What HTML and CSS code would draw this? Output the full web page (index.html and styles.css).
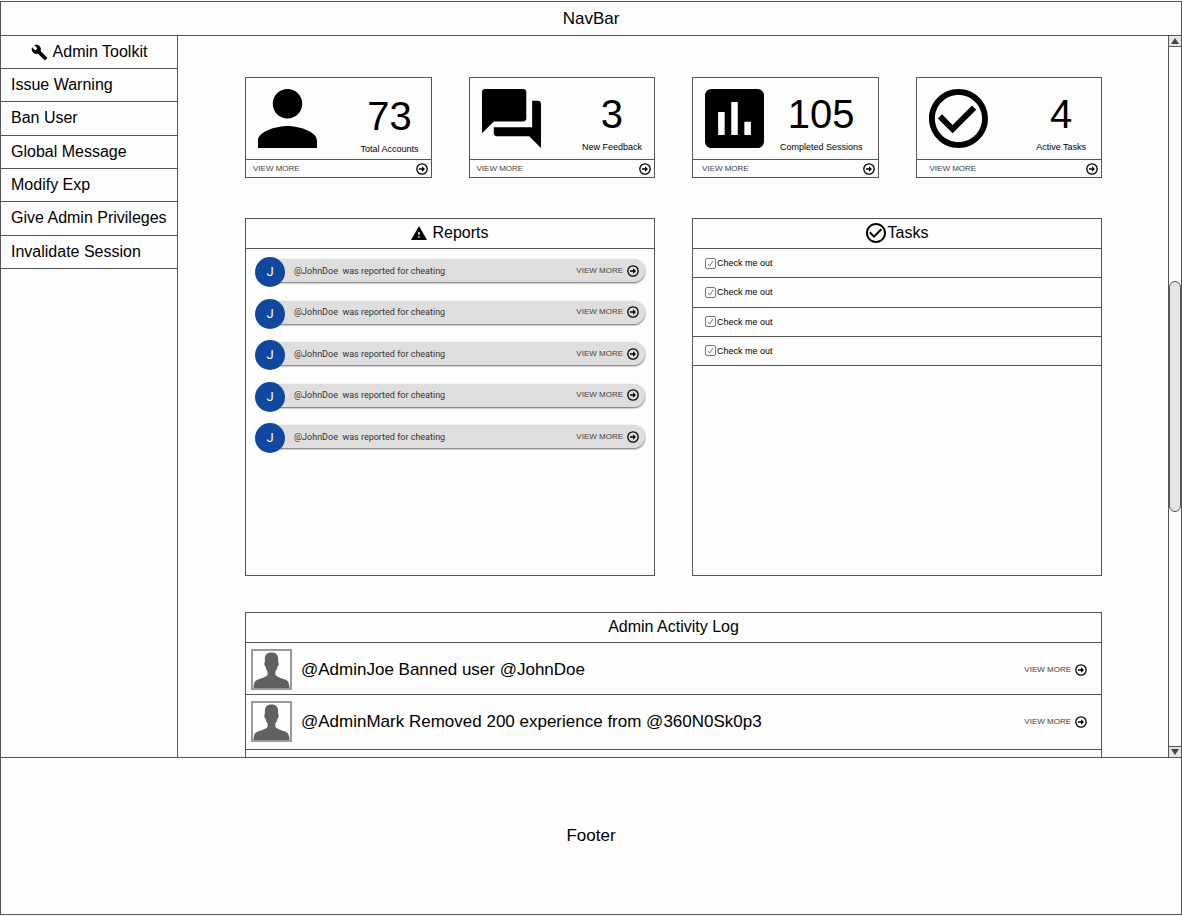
FILE: index.html
```
<!DOCTYPE html>
<html lang="en">
<head>
<meta charset="utf-8">
<title>Admin Dashboard</title>
<link rel="stylesheet" href="styles.css">
</head>
<body>
<svg class="sprite" aria-hidden="true">
  <symbol id="arrow" viewBox="0 0 12 12">
    <circle cx="6" cy="6" r="5.2" fill="none" stroke="#000" stroke-width="1.300"/>
    <path d="M3 5.200h3V3.200l3 2.800-3 2.800V6.800H3z"/>
  </symbol>
  <symbol id="check-circle" viewBox="2 2 20 20">
    <path d="M16.590 7.580L10 14.170l-3.590-3.580L5 12l5 5 8-8zM12 2C6.480 2 2 6.480 2 12s4.480 10 10 10 10-4.480 10-10S17.520 2 12 2zm0 18c-4.420 0-8-3.580-8-8s3.580-8 8-8 8 3.580 8 8-3.580 8-8 8z"/>
  </symbol>
  <symbol id="silhouette" viewBox="0 0 38 38">
    <path d="M12.200 8C12.200 3.500 15 1.500 19 1.500S25.800 3.500 25.800 8v3.500c1.200.3.600 4-.6 4.300-.4 2.400-1.300 4-2.200 5v3.700c1 1.500 2.500 2.200 4.500 3l6 2c3 1.200 3.800 4 4 8.500H.5c.2-4.500 1-7.300 4-8.500l6-2c2-.8 3.500-1.500 4.500-3v-3.700c-.9-1-1.800-2.600-2.200-5-1.200-.3-1.800-4-.6-4.300z" fill="#606060"/>
  </symbol>
</svg>
<div class="app">
  <header class="navbar">NavBar</header>
  <div class="middle">
    <nav class="sidebar" aria-label="Admin Toolkit">
      <h2 class="sidebar-title">
        <svg class="wrench" viewBox="0 0 24 24" aria-hidden="true"><path d="M22.700 19l-9.100-9.100c.9-2.300.4-5-1.500-6.900-2-2-5-2.400-7.400-1.300L9 6 6 9 1.600 4.700C.4 7.100.9 10.100 2.900 12.100c1.900 1.900 4.600 2.400 6.900 1.500l9.100 9.100c.4.4 1 .4 1.400 0l2.300-2.300c.5-.4.5-1.100.1-1.400z"/></svg>
        Admin Toolkit
      </h2>
      <div class="sidebar-links">
        <a class="sidebar-link" href="#">Issue Warning</a>
        <a class="sidebar-link" href="#">Ban User</a>
        <a class="sidebar-link" href="#">Global Message</a>
        <a class="sidebar-link" href="#">Modify Exp</a>
        <a class="sidebar-link" href="#">Give Admin Privileges</a>
        <a class="sidebar-link" href="#">Invalidate Session</a>
      </div>
    </nav>

    <main class="content">
      <section class="stats">
        <article class="card">
          <div class="card-body">
            <svg class="card-icon" viewBox="4 4 16 16" aria-hidden="true"><path d="M12 12c2.210 0 4-1.790 4-4s-1.790-4-4-4-4 1.790-4 4 1.790 4 4 4zm0 2c-2.670 0-8 1.340-8 4v2h16v-2c0-2.660-5.330-4-8-4z"/></svg>
            <div class="figure figure-low"><span class="number">73</span><span class="label">Total Accounts</span></div>
          </div>
          <a class="card-link view-more" href="#">VIEW MORE<svg class="arrow" aria-hidden="true"><use href="#arrow"/></svg></a>
        </article>
        <article class="card">
          <div class="card-body">
            <svg class="card-icon" viewBox="2 2 20 20" aria-hidden="true"><path d="M21 6h-2v9H6v2c0 .55.45 1 1 1h11l4 4V7c0-.55-.45-1-1-1zm-4 6V3c0-.55-.45-1-1-1H3c-.55 0-1 .45-1 1v14l4-4h10c.55 0 1-.45 1-1z"/></svg>
            <div class="figure"><span class="number">3</span><span class="label">New Feedback</span></div>
          </div>
          <a class="card-link view-more" href="#">VIEW MORE<svg class="arrow" aria-hidden="true"><use href="#arrow"/></svg></a>
        </article>
        <article class="card card-wide">
          <div class="card-body">
            <svg class="card-icon" viewBox="3 3 18 18" aria-hidden="true"><path d="M19 3H5c-1.100 0-2 .9-2 2v14c0 1.100.9 2 2 2h14c1.100 0 2-.9 2-2V5c0-1.100-.9-2-2-2zM9 17H7v-7h2v7zm4 0h-2V7h2v10zm4 0h-2v-4h2v4z"/></svg>
            <div class="figure"><span class="number">105</span><span class="label">Completed Sessions</span></div>
          </div>
          <a class="card-link view-more" href="#">VIEW MORE<svg class="arrow" aria-hidden="true"><use href="#arrow"/></svg></a>
        </article>
        <article class="card card-wide card-tasks">
          <div class="card-body">
            <svg class="card-icon" aria-hidden="true"><use href="#check-circle"/></svg>
            <div class="figure"><span class="number">4</span><span class="label">Active Tasks</span></div>
          </div>
          <a class="card-link view-more" href="#">VIEW MORE<svg class="arrow" aria-hidden="true"><use href="#arrow"/></svg></a>
        </article>
      </section>

      <section class="panels">
        <article class="panel">
          <h2 class="panel-title">
            <svg class="warning" viewBox="1 2 22 19" aria-hidden="true"><path d="M1 21h22L12 2 1 21zm12-3h-2v-2h2v2zm0-4h-2v-4h2v4z"/></svg>
            Reports
          </h2>
          <ul class="reports">
            <li class="report"><span class="initial">J</span><div class="bar"><span class="report-text">@JohnDoe&nbsp; was reported for cheating</span><a class="view-more" href="#">VIEW MORE<svg class="arrow" aria-hidden="true"><use href="#arrow"/></svg></a></div></li>
            <li class="report"><span class="initial">J</span><div class="bar"><span class="report-text">@JohnDoe&nbsp; was reported for cheating</span><a class="view-more" href="#">VIEW MORE<svg class="arrow" aria-hidden="true"><use href="#arrow"/></svg></a></div></li>
            <li class="report"><span class="initial">J</span><div class="bar"><span class="report-text">@JohnDoe&nbsp; was reported for cheating</span><a class="view-more" href="#">VIEW MORE<svg class="arrow" aria-hidden="true"><use href="#arrow"/></svg></a></div></li>
            <li class="report"><span class="initial">J</span><div class="bar"><span class="report-text">@JohnDoe&nbsp; was reported for cheating</span><a class="view-more" href="#">VIEW MORE<svg class="arrow" aria-hidden="true"><use href="#arrow"/></svg></a></div></li>
            <li class="report"><span class="initial">J</span><div class="bar"><span class="report-text">@JohnDoe&nbsp; was reported for cheating</span><a class="view-more" href="#">VIEW MORE<svg class="arrow" aria-hidden="true"><use href="#arrow"/></svg></a></div></li>
          </ul>
        </article>
        <article class="panel">
          <h2 class="panel-title panel-title-tight">
            <svg class="tasks-icon" aria-hidden="true"><use href="#check-circle"/></svg>
            Tasks
          </h2>
          <ul class="tasks">
            <li class="task"><label class="task-label"><input class="tick" type="checkbox" checked>Check me out</label></li>
            <li class="task"><label class="task-label"><input class="tick" type="checkbox" checked>Check me out</label></li>
            <li class="task"><label class="task-label"><input class="tick" type="checkbox" checked>Check me out</label></li>
            <li class="task"><label class="task-label"><input class="tick" type="checkbox" checked>Check me out</label></li>
          </ul>
        </article>
      </section>

      <section class="log">
        <h2 class="panel-title">Admin Activity Log</h2>
        <ul class="log-list">
          <li class="log-row"><svg class="avatar" aria-hidden="true"><use href="#silhouette"/></svg><span class="log-text">@AdminJoe Banned user @JohnDoe</span><a class="view-more" href="#">VIEW MORE<svg class="arrow" aria-hidden="true"><use href="#arrow"/></svg></a></li>
          <li class="log-row"><svg class="avatar" aria-hidden="true"><use href="#silhouette"/></svg><span class="log-text">@AdminMark Removed 200 experience from @360N0Sk0p3</span><a class="view-more" href="#">VIEW MORE<svg class="arrow" aria-hidden="true"><use href="#arrow"/></svg></a></li>
          <li class="log-row log-empty"></li>
        </ul>
      </section>
    </main>

    <div class="scrollbar">
      <button class="scroll-button" type="button" aria-label="Scroll up"><svg class="triangle" viewBox="0 0 8 6"><path d="M4 0l4 6H0z" fill="#444"/></svg></button>
      <div class="track"><div class="thumb"></div></div>
      <button class="scroll-button" type="button" aria-label="Scroll down"><svg class="triangle" viewBox="0 0 8 6"><path d="M0 0h8L4 6z" fill="#444"/></svg></button>
    </div>
  </div>
  <footer class="footer">Footer</footer>
</div>
</body>
</html>
```
FILE: styles.css
```
:root {
  --line: #555;
}

* {
  box-sizing: border-box;
}

body {
  margin: 0;
  padding: 1px 0;
  background: #fdfdfd;
  color: #000;
  font: 16px/20px "Liberation Sans", Arial, sans-serif;
}

h2 {
  margin: 0;
  font: inherit;
}

ul {
  margin: 0;
  padding: 0;
  list-style: none;
}

a {
  color: inherit;
  text-decoration: none;
}

.sprite {
  position: absolute;
  width: 0;
  height: 0;
}

.app {
  display: flex;
  flex-direction: column;
  height: calc(100vh - 2px);
  border: 1px solid var(--line);
}

.navbar {
  padding: 7px 0 6px;
  font-size: 17px;
  text-align: center;
}

.middle {
  display: flex;
  flex: 1;
  min-height: 0;
  border: solid var(--line);
  border-width: 1px 0;
}

.sidebar {
  flex: none;
  width: 177px;
  border-right: 1px solid var(--line);
}

.sidebar-title {
  display: flex;
  align-items: center;
  justify-content: center;
  gap: 5px;
  height: 33px;
  border-bottom: 1px solid var(--line);
}

.wrench {
  width: 17px;
  height: 17px;
}

.sidebar-links {
  display: grid;
  grid-auto-rows: 1fr;
  height: 200px;
}

.sidebar-link {
  display: flex;
  align-items: center;
  padding-left: 10px;
  border-bottom: 1px solid var(--line);
}

.content {
  flex: 1;
  min-width: 0;
  overflow: hidden;
  padding: 41px 66px 0 67px;
}

.stats {
  display: grid;
  grid-template-columns: repeat(4, 1fr);
  gap: 37px;
}

.card,
.panel,
.log {
  border: 1px solid var(--line);
}

.card-body {
  display: flex;
  justify-content: space-between;
  padding: 11px 12px 0;
  height: 81px;
}

.card-icon {
  flex: none;
  width: 59px;
  height: 59px;
}

.figure {
  display: flex;
  flex-direction: column;
  align-items: center;
  padding-top: 3px;
}

.figure-low {
  padding-top: 5px;
}

.number {
  font-size: 40px;
  line-height: 44px;
}

.label {
  font-size: 9px;
  line-height: 22px;
}

.card-wide .card-body {
  padding-right: 15px;
}

.view-more {
  display: flex;
  align-items: center;
  gap: 4px;
  color: #444;
  font-size: 8px;
  line-height: 12px;
}

.arrow {
  width: 12px;
  height: 12px;
}

.card-link {
  justify-content: space-between;
  height: 18px;
  padding: 0 3px 0 7px;
  border-top: 1px solid var(--line);
}

.card-wide .card-link {
  padding-left: 9px;
}

.card-tasks .card-link {
  padding-left: 13px;
}

.panels {
  display: grid;
  grid-template-columns: repeat(2, 1fr);
  gap: 37px;
  margin: 40px 0 36px;
}

.panel {
  min-height: 358px;
}

.panel-title {
  display: flex;
  align-items: center;
  justify-content: center;
  gap: 5px;
  height: 30px;
  padding-bottom: 2px;
  border-bottom: 1px solid var(--line);
}

.panel-title-tight {
  gap: 2px;
}

.warning {
  width: 16px;
  height: 14px;
}

.tasks-icon {
  width: 20px;
  height: 20px;
}

.reports {
  display: grid;
  align-content: space-between;
  height: 212px;
  padding: 8px 9px;
}

.report {
  display: flex;
}

.initial {
  z-index: 1;
  flex: none;
  width: 30px;
  border-radius: 50%;
  background: #11489f;
  color: #fff;
  font: 13px/30px Roboto, sans-serif;
  text-align: center;
}

.bar {
  display: flex;
  flex: 1;
  align-items: center;
  justify-content: space-between;
  height: 23px;
  margin: 2px 0 0 -15px;
  padding: 0 6px 0 24px;
  border-radius: 12px;
  background: #dedede;
  box-shadow: 0 1px 2px #666;
}

.report-text {
  color: #333;
  font: 9px/12px Roboto, sans-serif;
}

.tasks {
  display: grid;
  grid-auto-rows: 1fr;
  height: 117px;
}

.task {
  display: flex;
  border-bottom: 1px solid var(--line);
}

.task-label {
  display: flex;
  align-items: center;
  gap: 1px;
  padding-left: 12px;
  font-size: 9px;
}

.tick {
  appearance: none;
  width: 11px;
  height: 11px;
  margin: 0;
  border: 1px solid #777;
  border-radius: 2px;
}

.tick:checked {
  background: url("data:image/svg+xml,%3Csvg xmlns='http://www.w3.org/2000/svg' viewBox='0 0 9 9'%3E%3Cpath d='M2 5l1.800 2L7 2' fill='none' stroke='%23777'/%3E%3C/svg%3E");
}

.log-row {
  display: flex;
  align-items: center;
  padding: 6px 14px 4px 5px;
  border-bottom: 1px solid var(--line);
}

.log-row + .log-row {
  padding-bottom: 7px;
}

.log-empty {
  height: 52px;
}

.avatar {
  width: 41px;
  height: 41px;
  border: 2px solid #999;
}

.log-text {
  flex: 1;
  padding-left: 9px;
  font-size: 17px;
}

.scrollbar {
  display: flex;
  flex: none;
  flex-direction: column;
  width: 13px;
  border-left: 1px solid var(--line);
}

.scroll-button {
  display: flex;
  align-items: center;
  justify-content: center;
  height: 11px;
  padding: 0;
  border: solid var(--line);
  border-width: 0 0 1px;
  background: #e6e6e6;
}

.track + .scroll-button {
  border-width: 1px 0 0;
}

.triangle {
  width: 8px;
  height: 6px;
}

.track {
  display: flex;
  flex: 1;
  align-items: center;
}

.thumb {
  width: 100%;
  height: 33%;
  border: 1px solid var(--line);
  border-radius: 6px;
  background: #e4e4e4;
}

.footer {
  padding: 68px 0;
  font-size: 17px;
  text-align: center;
}
```
